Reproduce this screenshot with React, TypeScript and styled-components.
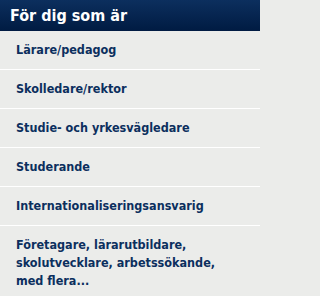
import React from "react";
import styled, { createGlobalStyle } from "styled-components";

const Global = createGlobalStyle`
  html, body { margin: 0; padding: 0; background: #ebecea; }
  * { box-sizing: border-box; }
`;

const Panel = styled.nav`
  width: 260px;
  font-family: "DejaVu Sans Condensed", "DejaVu Sans", Verdana, sans-serif;
  background: #ebecea;
`;

const Header = styled.h2`
  margin: 0;
  height: 31px;
  display: flex;
  align-items: center;
  padding: 0 10px;
  background: linear-gradient(#0c2f5e, #001b42);
  color: #ffffff;
  font-size: 16px;
  font-weight: bold;
`;

const List = styled.ul`
  list-style: none;
  margin: 0;
  padding: 0;
`;

const Item = styled.li`
  border-top: 1px solid #ffffff;
  &:first-child { border-top: none; }
`;

const Link = styled.a<{ $tall?: boolean }>`
  display: block;
  padding: ${(p) => (p.$tall ? "10px 16px 10px" : "0 16px")};
  line-height: ${(p) => (p.$tall ? "18px" : "38px")};
  color: #0b2f5e;
  font-size: 12.5px;
  font-weight: bold;
  text-decoration: none;
`;

const items = [
  "Lärare/pedagog",
  "Skolledare/rektor",
  "Studie- och yrkesvägledare",
  "Studerande",
  "Internationaliseringsansvarig",
];

export default function App() {
  return (
    <>
      <Global />
      <Panel>
        <Header>För dig som är</Header>
        <List>
          {items.map((t) => (
            <Item key={t}>
              <Link href="#">{t}</Link>
            </Item>
          ))}
          <Item>
            <Link href="#" $tall>
              Företagare, lärarutbildare, skolutvecklare, arbetssökande, med flera...
            </Link>
          </Item>
        </List>
      </Panel>
    </>
  );
}
